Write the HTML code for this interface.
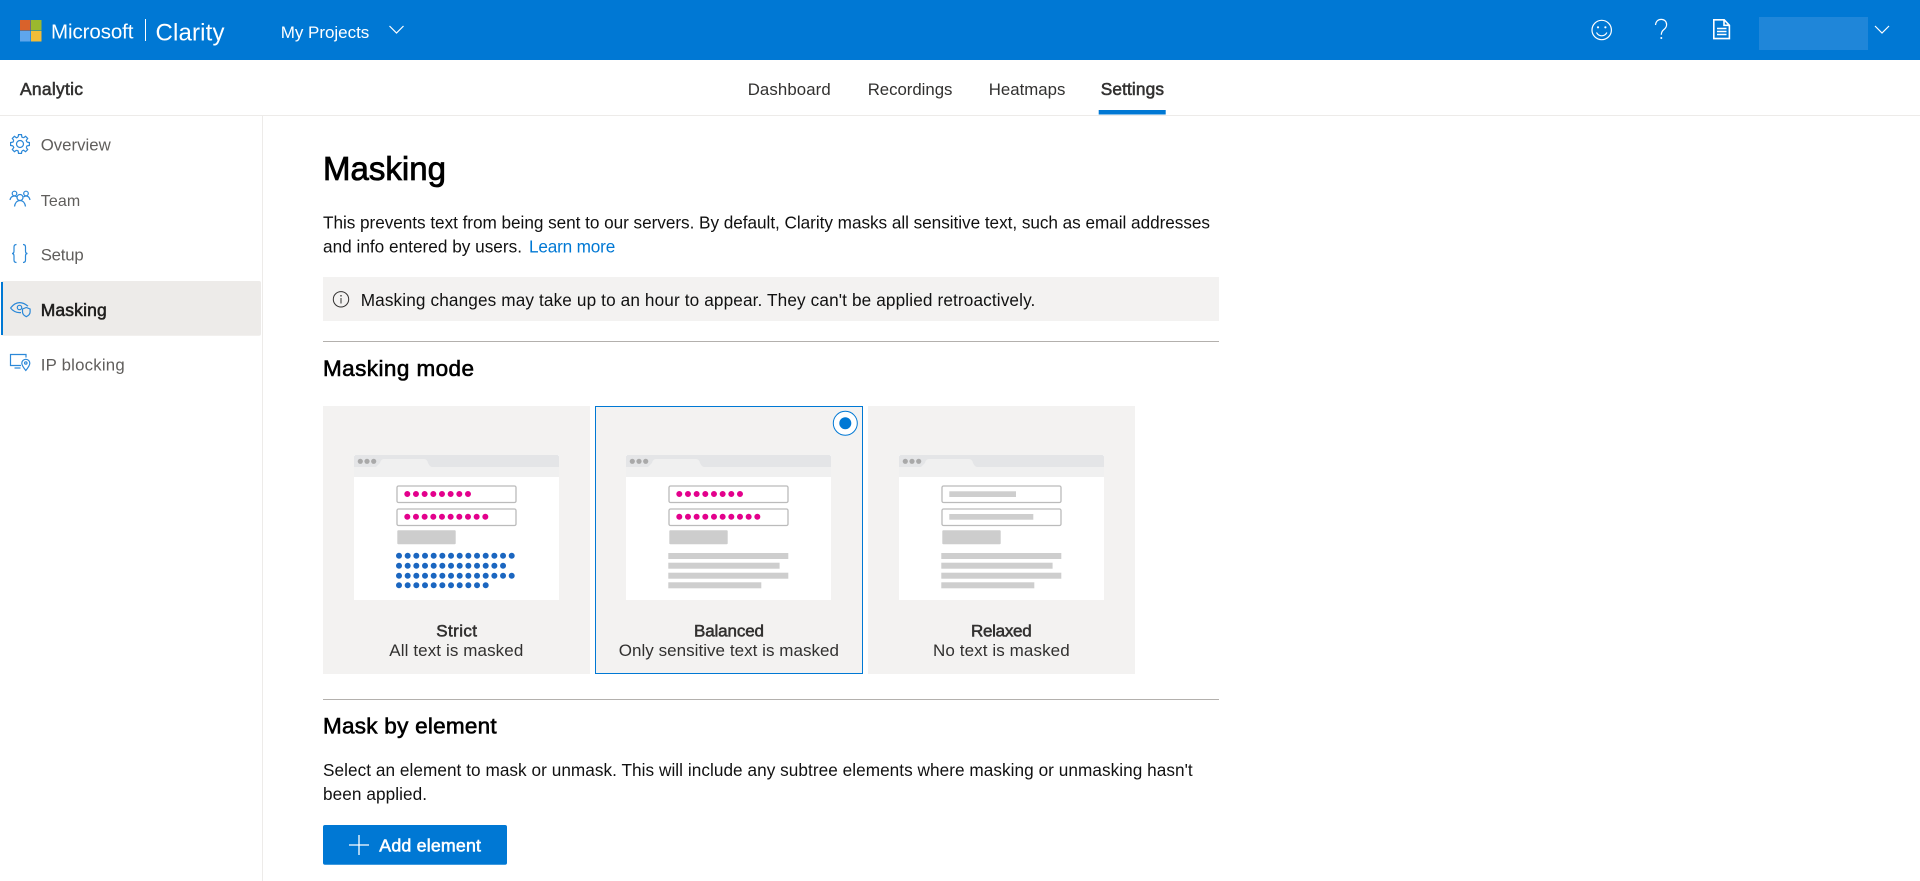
<!DOCTYPE html>
<html lang="en">
<head>
<meta charset="utf-8">
<title>Masking - Clarity</title>
<style>
html,body{margin:0;padding:0;background:#fff;width:1920px;height:881px;overflow:hidden}
svg{display:block;position:absolute;left:0;top:0}
text{font-family:"Liberation Sans",Arial,sans-serif;white-space:pre}
.s{stroke:currentColor;stroke-width:.55px}
.ic{fill:none;stroke:#2b88d8;stroke-width:1.2}
.w{fill:none;stroke:#fff;stroke-width:1.2}
.b{font-size:17.2px;fill:#111}
.n{font-size:16.8px;fill:#323130}
.side{font-size:16.8px;fill:#605e5c}
.cl{font-size:17px;fill:#323130}
</style>
</head>
<body>
<svg width="1920" height="881" viewBox="0 0 1920 881" xmlns="http://www.w3.org/2000/svg">
<defs>
<g id="base">
  <rect width="205" height="145" fill="#fff"/>
  <path d="M0 22V2Q0 0 2 0H203Q205 0 205 2V22Z" fill="#f0f0f0"/>
  <path d="M0 12V2Q0 0 2 0H203Q205 0 205 2V12H78Q76 12 74 8Q73 4 70 4H30Q27 4 26 8L22 12Z" fill="#e4e5e7"/>
  <g fill="#a9a9a9"><circle cx="6.3" cy="6.3" r="2.6"/><circle cx="13" cy="6.3" r="2.6"/><circle cx="19.7" cy="6.3" r="2.6"/></g>
  <rect x="43" y="31" width="119" height="16.5" rx="1.5" fill="#fff" stroke="#bbb" stroke-width="1.3"/>
  <rect x="43" y="54" width="119" height="16.5" rx="1.5" fill="#fff" stroke="#bbb" stroke-width="1.3"/>
  <rect x="43.3" y="75.3" width="58.4" height="14" rx="1" fill="#cdcdcd"/>
</g>
<g id="pink" stroke="#e3008c" stroke-width="6" stroke-linecap="round" stroke-dasharray="0 8.67" fill="none">
  <line x1="53.3" y1="39" x2="114.1" y2="39"/>
  <line x1="53.3" y1="61.7" x2="131.4" y2="61.7"/>
</g>
<g id="lines" fill="#cecece">
  <rect x="42.3" y="98" width="120" height="6"/>
  <rect x="42.3" y="107.7" width="111.3" height="6"/>
  <rect x="42.3" y="117.7" width="120" height="6"/>
  <rect x="42.3" y="127.3" width="93" height="6"/>
</g>
<path id="tooth" d="M6.95-1.86 9.38-1.49V1.49L6.95 1.86 6.24 3.6"/>
</defs>

<!-- top bar -->
<rect width="1920" height="60" fill="#0078d4"/>
<rect x="20" y="20" width="10.5" height="10.5" fill="#d9622b"/>
<rect x="31" y="20" width="10.5" height="10.5" fill="#9bb82e"/>
<rect x="20" y="31" width="10.5" height="10.5" fill="#5ea6ec"/>
<rect x="31" y="31" width="10.5" height="10.5" fill="#f2bd38"/>
<text x="51" y="38.5" font-size="20.5" fill="#fff" textLength="82.5">Microsoft</text>
<rect x="145" y="19" width="1" height="22" fill="#fff"/>
<text x="155.5" y="40.7" font-size="24" fill="#fff" textLength="69">Clarity</text>
<text x="280.7" y="38" font-size="17" fill="#fff" textLength="88.6">My Projects</text>
<path class="w" d="M389.5 26l7 7 7-7"/>

<circle class="w" cx="1601.7" cy="30" r="9.7"/>
<circle cx="1598" cy="27.3" r="1.1" fill="#fff"/><circle cx="1605.4" cy="27.3" r="1.1" fill="#fff"/>
<path class="w" d="M1596.5 32.5c1.2 2.3 3 3.3 5.2 3.3s4-1 5.2-3.3"/>
<path class="w" d="M1655.5 25c.4-3.6 2.6-5.6 5.7-5.6 3.2 0 5.4 2.100 5.400 5.200 0 2.300-1 3.600-2.800 5-1.800 1.400-2.500 2.600-2.500 5.200"/>
<circle cx="1661.300" cy="38" r="1" fill="#fff"/>
<path class="w" style="stroke-width:1.6" d="M1713.800 19.800h10.400l5.200 5.500v13.300h-15.600zM1724 19.800v5.500h5.400"/>
<path d="M1717 28.500h9.500M1717 31.500h9.500M1717 34.500h9.500" fill="none" stroke="#fff" stroke-width="1.600"/>
<rect x="1759" y="17" width="109" height="33" fill="#1f86d9"/>
<path class="w" d="M1875 26l7 7 7-7"/>

<!-- sub nav -->
<rect y="115" width="1920" height="1" fill="#edebe9"/>
<rect x="262" y="116" width="1" height="765" fill="#edebe9"/>
<text class="s" x="20" y="95" font-size="17.500" fill="#323130" color="#323130" textLength="63">Analytic</text>
<text class="n" x="747.700" y="95" textLength="83">Dashboard</text>
<text class="n" x="867.700" y="95" textLength="84.700">Recordings</text>
<text class="n" x="988.700" y="95" textLength="76.700">Heatmaps</text>
<text class="s" x="1100.700" y="95" font-size="17.300" fill="#323130" color="#323130" textLength="63.300">Settings</text>
<rect x="1098.700" y="110" width="67" height="4.500" fill="#0078d4"/>

<!-- sidebar -->
<rect x="1" y="281" width="260" height="54.700" rx="2" fill="#edebe9"/>
<rect x="1" y="282" width="2" height="53" fill="#0078d4"/>

<g class="ic" transform="translate(20 144)">
  <use href="#tooth"/><use href="#tooth" transform="rotate(45)"/><use href="#tooth" transform="rotate(90)"/><use href="#tooth" transform="rotate(135)"/><use href="#tooth" transform="rotate(180)"/><use href="#tooth" transform="rotate(225)"/><use href="#tooth" transform="rotate(270)"/><use href="#tooth" transform="rotate(315)"/>
  <circle r="3.500"/>
</g>
<text class="side" x="40.700" y="150.700" textLength="70">Overview</text>

<g class="ic">
  <circle cx="20" cy="197.500" r="3"/>
  <path d="M14.500 206.500c.5-3.500 2.500-6 5.500-6s5 2.500 5.500 6"/>
  <circle cx="14.500" cy="193.500" r="2.300"/>
  <circle cx="26" cy="193.500" r="2.300"/>
  <path d="M10 200c.5-2.500 2-4 4.500-4 1 0 1.800.3 2.400 1M30 200c-.5-2.500-2-4-4-4-1 0-1.800.3-2.400 1"/>
</g>
<text class="side" x="40.700" y="206" style="font-size:16px" textLength="39.500">Team</text>

<g class="ic">
  <path d="M16.500 244.500c-2 0-2.500 1-2.500 2.500v4c0 1.500-.7 2.500-2 2.500 1.300 0 2 1 2 2.500v4c0 1.500.5 2.500 2.500 2.500"/>
  <path d="M23 244.500c2 0 2.500 1 2.500 2.500v4c0 1.500.7 2.500 2 2.500-1.300 0-2 1-2 2.500v4c0 1.500-.5 2.500-2.500 2.500"/>
</g>
<text class="side" x="40.700" y="260.700" textLength="43">Setup</text>

<g class="ic">
  <path d="M10.500 308c3-3.800 6-5.400 9-5.400s5.500 1 8.500 3.600"/>
  <path d="M10.500 308c2.500 3 5 4.600 9 4.600h1.500"/>
  <circle cx="19.500" cy="307.500" r="2.200"/>
  <path d="M22.500 309l3.800-1.500 3.800 1.500v3c0 2.300-1.800 3.700-3.800 4.700-2-1-3.800-2.400-3.800-4.700z"/>
</g>
<text class="s" x="40.700" y="316" font-size="17.500" fill="#201f1e" color="#201f1e" textLength="66">Masking</text>

<g class="ic">
  <path d="M21 365.500H10.500v-11h15.500v3"/>
  <path d="M14.500 368h6"/>
  <path d="M25.800 370.500c-2.500-3-4-5-4-7.200a4 4 0 0 1 8 0c0 2.200-1.500 4.200-4 7.200z"/>
  <circle cx="25.800" cy="363" r="1.200"/>
</g>
<text class="side" x="40.700" y="370.700" textLength="84">IP blocking</text>

<!-- main -->
<text class="s" x="323" y="180" font-size="33" fill="#000" color="#000" style="stroke-width:.8px" textLength="123">Masking</text>
<text class="b" x="323" y="228.300" textLength="887">This prevents text from being sent to our servers. By default, Clarity masks all sensitive text, such as email addresses</text>
<text class="b" x="323" y="252.300" textLength="199">and info entered by users.</text>
<text x="529" y="252.300" font-size="17.200" fill="#0078d4" textLength="86.300">Learn more</text>

<rect x="323" y="277" width="896" height="44" fill="#f3f2f1"/>
<circle cx="341" cy="299.300" r="7.700" fill="none" stroke="#323130" stroke-width="1"/>
<circle cx="341" cy="295.800" r=".8" fill="#323130"/>
<rect x="340.500" y="298" width="1" height="5.500" fill="#323130"/>
<text class="b" x="360.700" y="306" textLength="674.600">Masking changes may take up to an hour to appear. They can't be applied retroactively.</text>
<rect x="323" y="341" width="896" height="1" fill="#b3b0ad"/>

<text class="s" x="323" y="376" font-size="22.500" fill="#000" color="#000" style="stroke-width:.6px" textLength="151">Masking mode</text>

<!-- cards -->
<rect x="323" y="406" width="267" height="268" fill="#f3f2f1"/>
<rect x="595.500" y="406.500" width="267" height="267" fill="#f3f2f1" stroke="#0078d4" stroke-width="1"/>
<rect x="868" y="406" width="267" height="268" fill="#f3f2f1"/>

<g transform="translate(354 455)">
  <use href="#base"/><use href="#pink"/>
  <g stroke="#1b66c0" stroke-width="6" stroke-linecap="round" stroke-dasharray="0 8.67" fill="none">
    <line x1="45" y1="100.700" x2="157.800" y2="100.700"/>
    <line x1="45" y1="110.700" x2="149.100" y2="110.700"/>
    <line x1="45" y1="120.700" x2="157.800" y2="120.700"/>
    <line x1="45" y1="130.300" x2="131.800" y2="130.300"/>
  </g>
</g>
<g transform="translate(626 455)"><use href="#base"/><use href="#pink"/><use href="#lines"/></g>
<g transform="translate(899 455)">
  <use href="#base"/><use href="#lines"/>
  <rect x="50.300" y="36.300" width="66.700" height="5.700" fill="#cecece"/>
  <rect x="50.300" y="59" width="84" height="5.700" fill="#cecece"/>
</g>

<circle cx="845.300" cy="423.300" r="12" fill="#fff" stroke="#0078d4" stroke-width="1"/>
<circle cx="845.300" cy="423.300" r="6" fill="#0078d4"/>

<text class="cl s" x="436.300" y="636.700" color="#323130" textLength="40.700">Strict</text>
<text class="cl" x="389.300" y="656" textLength="134">All text is masked</text>
<text class="cl s" x="694" y="636.700" color="#323130" textLength="70">Balanced</text>
<text class="cl" x="618.700" y="656" textLength="220.300">Only sensitive text is masked</text>
<text class="cl s" x="971" y="636.700" color="#323130" textLength="60.700">Relaxed</text>
<text class="cl" x="933" y="656" textLength="136.700">No text is masked</text>

<rect x="323" y="699" width="896" height="1" fill="#b3b0ad"/>
<text class="s" x="323" y="733.300" font-size="22.500" fill="#000" color="#000" style="stroke-width:.6px" textLength="173.700">Mask by element</text>
<text class="b" x="323" y="776" textLength="869.700">Select an element to mask or unmask. This will include any subtree elements where masking or unmasking hasn't</text>
<text class="b" x="323" y="800" textLength="104">been applied.</text>

<rect x="323" y="825" width="184" height="39.700" rx="2" fill="#0078d4"/>
<path d="M349 845h20M359 835v20" stroke="#fff" stroke-width="1.300" fill="none"/>
<text class="s" x="379.300" y="851.700" font-size="17.800" fill="#fff" color="#fff" textLength="101.700">Add element</text>
</svg>
</body>
</html>
